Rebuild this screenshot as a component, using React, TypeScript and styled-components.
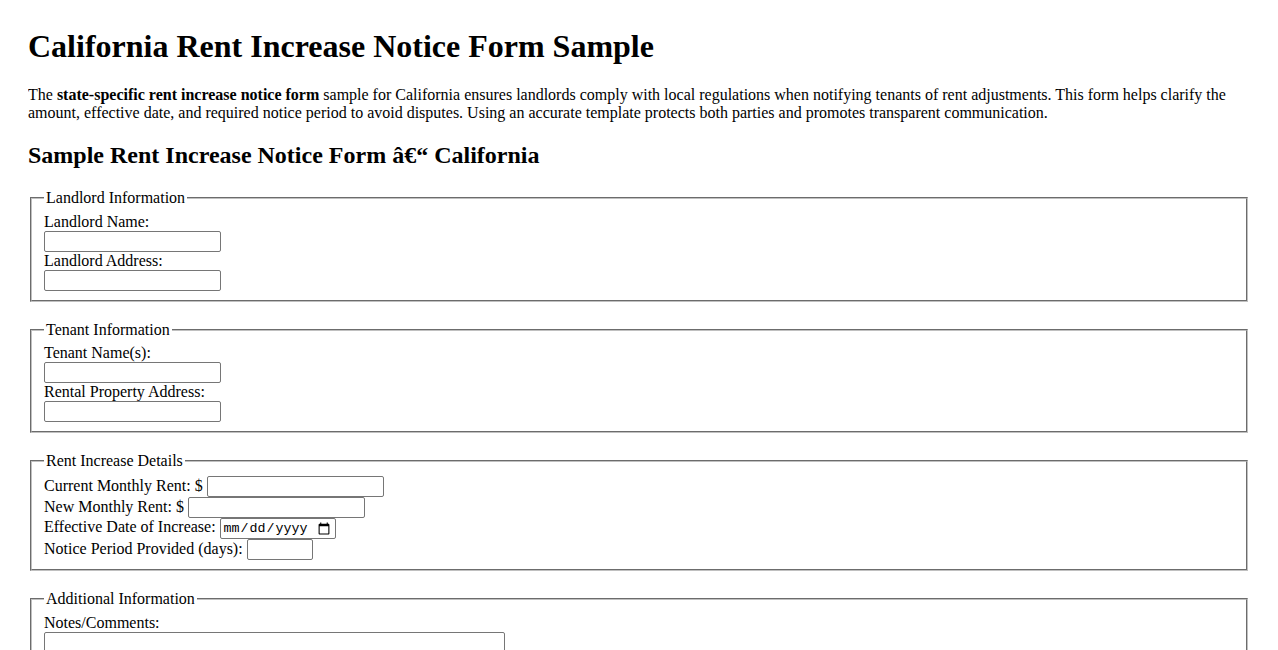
import React from "react";
import styled, { createGlobalStyle } from "styled-components";

const GlobalStyle = createGlobalStyle`
  html, body {
    background: #ffffff;
  }
  body {
    margin: 28px;
    font-family: "Liberation Serif", "Times New Roman", serif;
    font-size: 16px;
    color: #000000;
  }
`;

const Page = styled.main`
  display: block;
`;

const Title = styled.h1`
  font-size: 32px;
  font-weight: bold;
  margin: 0 0 21.44px;
`;

const Intro = styled.p`
  margin: 16px 0;
  line-height: normal;
`;

const Subtitle = styled.h2`
  font-size: 24px;
  font-weight: bold;
  margin: 19.92px 0;
`;

const Form = styled.form`
  display: block;
`;

const Section = styled.fieldset`
  margin: 0 2px 19px;
  padding: 0.35em 0.75em 9px;
  border: 2px groove rgb(192, 192, 192);
  min-inline-size: min-content;
`;

const Legend = styled.legend`
  padding: 0 2px;
`;

const Label = styled.label`
  display: block;
  line-height: normal;
`;

const Row = styled.div`
  display: block;
  line-height: normal;
  height: 21px;
`;

const Input = styled.input<{ $w?: number }>`
  box-sizing: border-box;
  width: ${(p) => p.$w ?? 177}px;
  height: 21px;
  margin: 0;
  padding: 1px 2px;
  border: 1px solid #767676;
  border-radius: 2px;
  font-family: "Liberation Sans", Arial, sans-serif;
  font-size: 13.33px;
  background: #ffffff;
  vertical-align: baseline;
`;

const BlockInput = styled(Input)`
  display: block;
`;

const DateInput = styled.input`
  box-sizing: border-box;
  width: 116px;
  height: 21px;
  margin: 0;
  padding: 1px 2px;
  border: 1px solid #767676;
  border-radius: 2px;
  font-family: "Liberation Mono", "Courier New", monospace;
  font-size: 13.33px;
  background: #ffffff;
  vertical-align: baseline;
`;

const TextArea = styled.textarea`
  display: block;
  box-sizing: border-box;
  width: 461px;
  height: 60px;
  margin: 0;
  padding: 2px;
  border: 1px solid #767676;
  border-radius: 2px;
  font-family: "Liberation Mono", "Courier New", monospace;
  font-size: 13.33px;
  resize: both;
`;

export default function App() {
  return (
    <>
      <GlobalStyle />
      <Page>
        <Title>California Rent Increase Notice Form Sample</Title>
        <Intro>
          The <strong>state-specific rent increase notice form</strong> sample
          for California ensures landlords comply with local regulations when
          notifying tenants of rent adjustments. This form helps clarify the
          amount, effective date, and required notice period to avoid disputes.
          Using an accurate template protects both parties and promotes
          transparent communication.
        </Intro>
        <Subtitle>Sample Rent Increase Notice Form {"\u00e2\u20ac\u201c"} California</Subtitle>
        <Form onSubmit={(e) => e.preventDefault()}>
          <Section>
            <Legend>Landlord Information</Legend>
            <Label htmlFor="landlordName">Landlord Name:</Label>
            <BlockInput id="landlordName" type="text" />
            <Label htmlFor="landlordAddress">Landlord Address:</Label>
            <BlockInput id="landlordAddress" type="text" />
          </Section>

          <Section>
            <Legend>Tenant Information</Legend>
            <Label htmlFor="tenantName">Tenant Name(s):</Label>
            <BlockInput id="tenantName" type="text" />
            <Label htmlFor="propertyAddress">Rental Property Address:</Label>
            <BlockInput id="propertyAddress" type="text" />
          </Section>

          <Section>
            <Legend>Rent Increase Details</Legend>
            <Row>
              <label htmlFor="currentRent">Current Monthly Rent: $ </label>
              <Input id="currentRent" type="text" />
            </Row>
            <Row>
              <label htmlFor="newRent">New Monthly Rent: $ </label>
              <Input id="newRent" type="text" />
            </Row>
            <Row>
              <label htmlFor="effectiveDate">Effective Date of Increase: </label>
              <DateInput id="effectiveDate" type="date" />
            </Row>
            <Row>
              <label htmlFor="noticeDays">Notice Period Provided (days): </label>
              <Input id="noticeDays" type="number" $w={66} />
            </Row>
          </Section>

          <Section>
            <Legend>Additional Information</Legend>
            <Label htmlFor="notes">Notes/Comments:</Label>
            <TextArea id="notes" rows={4} />
          </Section>
        </Form>
      </Page>
    </>
  );
}
